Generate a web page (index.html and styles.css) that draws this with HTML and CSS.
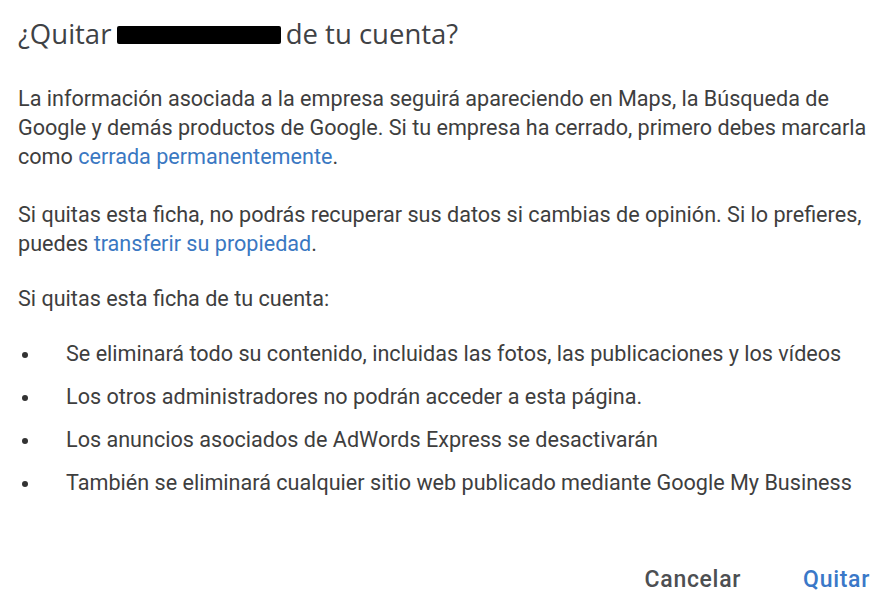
FILE: index.html
```html
<!DOCTYPE html>
<html lang="es">
<head>
    <meta charset="UTF-8">
    <title>Quitar ficha</title>
    <link rel="stylesheet" href="styles.css">
</head>
<body>
    <div class="dialog">
        <!-- Titulo -->
        <h1 class="dialog-title">¿Quitar <span class="redacted"></span> de tu cuenta?</h1>

        <div class="dialog-body">
            <p>La información asociada a la empresa seguirá apareciendo en Maps, la Búsqueda de Google y demás productos de Google. Si tu empresa ha cerrado, primero debes marcarla como <a href="#">cerrada permanentemente</a>.</p>
            <p class="p-second">Si quitas esta ficha, no podrás recuperar sus datos si cambias de opinión. Si lo prefieres, puedes <a href="#">transferir su propiedad</a>.</p>
            <p class="p-third">Si quitas esta ficha de tu cuenta:</p>
            <ul class="dialog-list">
                <li>Se eliminará todo su contenido, incluidas las fotos, las publicaciones y los vídeos</li>
                <li>Los otros administradores no podrán acceder a esta página.</li>
                <li>Los anuncios asociados de AdWords Express se desactivarán</li>
                <li>También se eliminará cualquier sitio web publicado mediante Google My Business</li>
            </ul>
        </div>

        <!-- Botones -->
        <div class="dialog-actions">
            <button class="btn btn-cancel">Cancelar</button>
            <button class="btn btn-primary">Quitar</button>
        </div>
    </div>
</body>
</html>
```

FILE: styles.css
```css
body {
    margin: 0;
    background: #ffffff;
    font-family: Roboto, "Liberation Sans", Arial, sans-serif;
}

.dialog {
    width: 884px;
    height: 602px;
    box-sizing: border-box;
    padding: 16px 14px 0 18px;
    display: flex;
    flex-direction: column;
}

.dialog-title {
    margin: 0;
    font-family: "Open Sans", Roboto, Arial, sans-serif;
    font-size: 27.5px;
    font-weight: 400;
    color: #3f4245;
    line-height: 36px;
}

/* Nombre tachado */
.redacted {
    display: inline-block;
    width: 164px;
    height: 18px;
    background: #000;
    border-radius: 2px;
    vertical-align: 0;
    margin-left: -2px;
    margin-right: -2px;
}

.dialog-body {
    margin-top: 32px;
    font-size: 21.6px;
    line-height: 29px;
    color: #3e3e3e;
}

.dialog-body p {
    margin: 0 0 29px 0;
}

.dialog-body .p-second {
    margin-bottom: 26px;
}

.dialog-body .p-third {
    margin-bottom: 26px;
}

.dialog-body a {
    color: #3a78c2;
    text-decoration: none;
}

.dialog-list {
    margin: 0;
    padding: 0;
    list-style: none;
}

.dialog-list li {
    position: relative;
    padding-left: 48px;
    margin-bottom: 14px;
}

.dialog-list li::before {
    content: "";
    position: absolute;
    left: 4px;
    top: 13px;
    width: 6px;
    height: 6px;
    border-radius: 50%;
    background: #333;
}

.dialog-actions {
    margin-top: auto;
    height: 36px;
    display: flex;
    justify-content: flex-end;
    align-items: flex-start;
    gap: 26px;
}

.btn {
    background: none;
    border: none;
    padding: 0;
    font-family: Roboto, "Liberation Sans", Arial, sans-serif;
    font-size: 23px;
    font-weight: 500;
    letter-spacing: 0.7px;
    cursor: pointer;
}

.btn-cancel {
    color: #4d4f52;
    margin-right: 36px;
}

.btn-primary {
    color: #3a78c8;
}
```
